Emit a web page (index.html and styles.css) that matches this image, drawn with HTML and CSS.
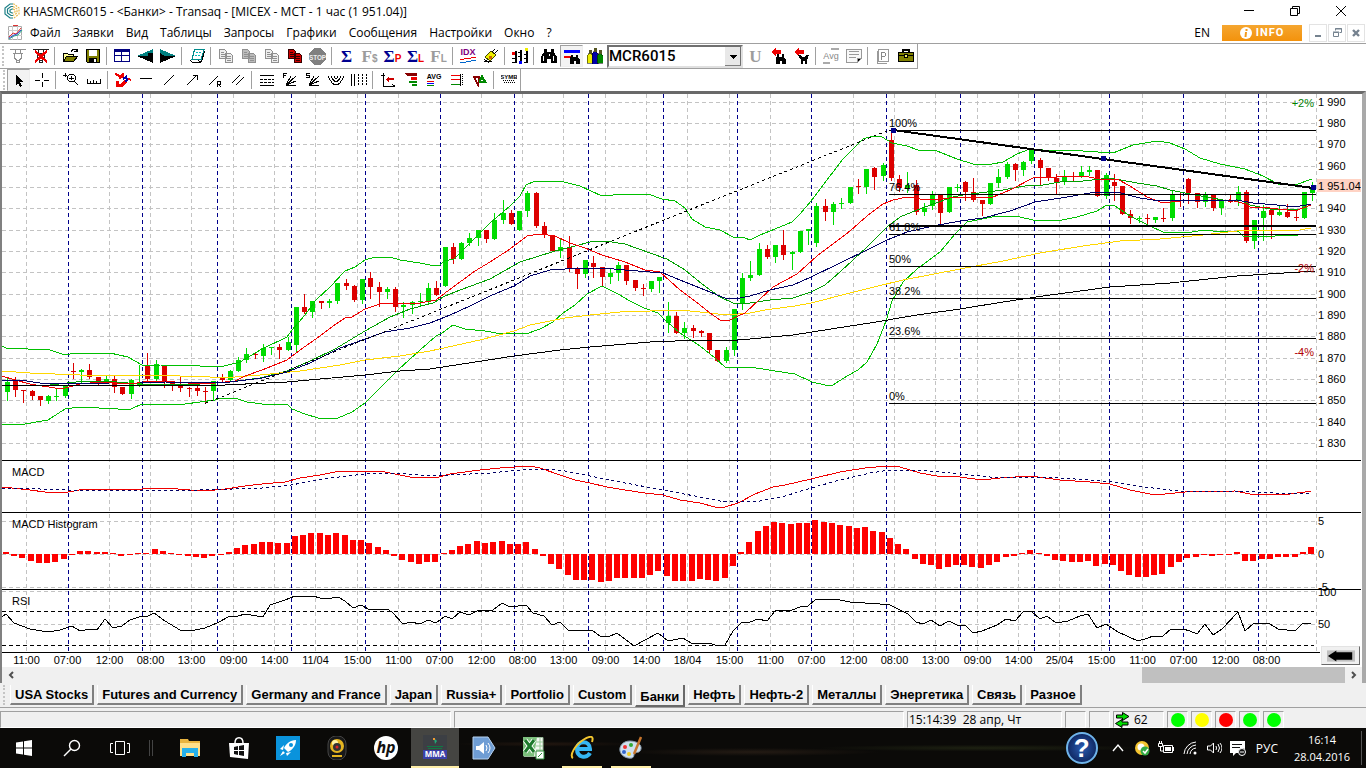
FILE: index.html
```html
<!DOCTYPE html>
<html lang="ru">
<head>
    <meta charset="UTF-8">
    <meta name="viewport" content="width=device-width, initial-scale=1.0">
    <title>Transaq</title>
    <link rel="stylesheet" href="styles.css">
</head>
<body>
    <header class="titleBar">
        <svg class="appIcon" viewBox="0 0 16 16"><g fill="none" stroke-width="1.2"><path stroke="#1a7f86" d="M9 1H6L1 5v6l5 4h3M9 3.500H7L3.500 6v4L7 12.500h2M9 6H8L6 7v2l2 1h1"/><path stroke="#e8b84a" d="M9 1h1l5 4v6l-5 4H9M9 3.500l4 2.500v4l-4 2.500M9 6l2 1v2l-2 1" stroke-dasharray="2 1"/></g></svg>
        <span class="titleText">KHASMCR6015 - &lt;Банки&gt; - Transaq - [MICEX - MCT - 1 час (1 951.04)]</span>
        <div class="windowButtons">
            <button aria-label="Свернуть"><svg viewBox="0 0 12 12"><path d="M1 5.500h10"/></svg></button>
            <button aria-label="Развернуть"><svg viewBox="0 0 12 12"><path d="M1.500 3.500h7v7h-7zM3.500 3.500v-2h7v7h-2"/></svg></button>
            <button aria-label="Закрыть"><svg viewBox="0 0 12 12"><path d="M1 1l10 10M11 1L1 11"/></svg></button>
        </div>
    </header>

    <nav class="menuBar">
        <svg class="docIcon" viewBox="0 0 16 16"><path fill="#fff" stroke="#aaa" d="M1.500 1.500h13v13h-13z"/><path stroke="#ccc" d="M5.500 1v14M10.500 1v14M1 5.500h14M1 10.500h14"/><path stroke="#d33" fill="none" d="M2 12l4-4 3 1 5-6M6 .500h5"/><path stroke="#2a8" fill="none" d="M2 14l5-3 4-1 4-5"/><path stroke="#44c" fill="none" d="M2 13l5-3 3-1 4-4"/></svg>
        <button>Файл</button>
        <button>Заявки</button>
        <button>Вид</button>
        <button>Таблицы</button>
        <button>Запросы</button>
        <button>Графики</button>
        <button>Сообщения</button>
        <button>Настройки</button>
        <button>Окно</button>
        <button>?</button>
        <span class="lang">EN</span>
        <button class="info"><svg viewBox="0 0 12 12"><circle cx="6" cy="6" r="6" fill="#fff"/><path stroke="#f39a1c" stroke-width="2" d="M6.500 2v2M6 5l-.500 5"/></svg>INFO</button>
        <div class="mdiButtons">
            <button aria-label="Свернуть окно"><svg viewBox="0 0 12 12"><path stroke-width="2" d="M3 9h6"/></svg></button>
            <button aria-label="Восстановить окно"><svg viewBox="0 0 12 12"><path d="M2.500 5.500h5v4h-5zM2 5h6M4.500 3.500v-2h6v4h-2M4 2h7"/></svg></button>
            <button aria-label="Закрыть окно"><svg viewBox="0 0 12 12"><path stroke-width="2.400" d="M3 3l6 6M9 3l-6 6"/></svg></button>
        </div>
    </nav>

    <div class="toolbar tradeBar">
        <i class="grip"></i>
        <button aria-label="Подключить"><svg viewBox="0 0 16 16"><path stroke="#909090" fill="none" d="M0 1.500h16M5.500 2v3M10.500 2v3M3 5.500h10M4.500 6v4l2 2h3l2-2V6M6.500 12v2.500h3V12"/></svg></button>
        <button aria-label="Отключить"><svg viewBox="0 0 16 16"><path stroke="#222" fill="none" d="M0 1.500h16M5.500 2v3M10.500 2v3M3 5.500h10M4.500 6v4l2 2h3l2-2V6M6.500 12v2.500h3V12"/><path stroke="#e00" stroke-width="2.500" d="M2 3l12 11M14 3L2 14"/></svg></button>
        <i class="sep"></i>
        <button aria-label="Открыть"><svg viewBox="0 0 16 16"><path fill="#ff9" stroke="#000" d="M1.500 13.500v-8h4l1 1h5v3"/><path fill="#808000" stroke="#000" d="M1.500 13.500l3-5h11l-4 5z"/><path fill="none" stroke="#000" d="M9 3.500l2-2h3l1 2m0-3v3h-3"/></svg></button>
        <button aria-label="Сохранить"><svg viewBox="0 0 16 16"><path fill="#808000" stroke="#000" d="M1.500 1.500h13v13h-12l-1-1z"/><path fill="#fff" d="M4 2h8v6H4z"/><path fill="#000" d="M4 10h8v5H4z"/><path fill="#fff" d="M9 11h2v3H9z"/></svg></button>
        <i class="sep"></i>
        <button aria-label="Таблица"><svg viewBox="0 0 16 16"><path fill="#fff" stroke="#000080" d="M.500 1.500h15v12H.500zM0 7.500h16M7.500 2v11"/><path fill="#000080" d="M0 1h16v3H0z"/></svg></button>
        <button aria-label="Назад"><svg viewBox="0 0 16 16"><path fill="#008080" d="M0 8l16-7v7z"/><path fill="#000" d="M0 8h11v-3h5v10z"/></svg></button>
        <button aria-label="Вперёд"><svg viewBox="0 0 16 16"><path fill="#008080" d="M16 8L0 1v7z"/><path fill="#000" d="M16 8H5L0 5v10z"/></svg></button>
        <i class="sep"></i>
        <button aria-label="Заявка"><svg viewBox="0 0 16 16"><path fill="#fff" stroke="#000" d="M1.500 11.500h8l1 3 2-1 3-10M1.500 11.500v1l2 2h7"/><path fill="#fff" stroke="#008b8b" d="M5.500 1.500h9.500l-3 10h-9z"/><path stroke="#0bb" stroke-dasharray="2 1" d="M7 4.500h6M6 7.500h5"/></svg></button>
        <i class="sep"></i>
        <button aria-label="Копия 1"><svg class="copy" viewBox="0 0 16 16"><path d="M1.500 1.500h5l2 2v7h-7zM7.500 5.500h5l2 2v7h-7z"/><path class="rows" d="M3 4.500h3M3 6.500h4M3 8.500h4M9 8.500h4M9 10.500h4M9 12.500h4"/></svg></button>
        <button aria-label="Копия 2"><svg class="copy solid" viewBox="0 0 16 16"><path d="M1.500 1.500h5l2 2v7h-7zM7.500 5.500h5l2 2v7h-7z"/><path class="rows" d="M3 4.500h3M3 6.500h4M3 8.500h4M9 8.500h4M9 10.500h4M9 12.500h4"/></svg></button>
        <button aria-label="Копия 3"><svg class="copy" viewBox="0 0 16 16"><path d="M1.500 1.500h5l2 2v7h-7zM7.500 5.500h5l2 2v7h-7z"/><path class="rows" d="M3 4.500h3M3 6.500h4M3 8.500h4M9 8.500h4M9 10.500h4M9 12.500h4"/></svg></button>
        <button aria-label="Копия 4"><svg class="copy redCopy" viewBox="0 0 16 16"><path d="M1.500 1.500h5l2 2v7h-7zM7.500 5.500h5l2 2v7h-7z"/><path class="rows" d="M3 4.500h3M3 6.500h4M3 8.500h4M9 8.500h4M9 10.500h4M9 12.500h4"/></svg></button>
        <button class="stop" aria-label="Стоп"><svg viewBox="0 0 16 16"><path fill="#808080" d="M5 0h6l5 5v6l-5 5H5l-5-5V5z"/><text x="8" y="11" text-anchor="middle" font-size="6" font-weight="bold" fill="#eee">STOP</text></svg></button>
        <i class="sep"></i>
        <button class="sigma">Σ</button>
        <button class="sigma off">F<small>$</small></button>
        <button class="sigma">Σ<small class="red">P</small></button>
        <button class="sigma">Σ<small class="red">L</small></button>
        <button class="sigma off">F<small>L</small></button>
        <i class="sep"></i>
        <button aria-label="IDX"><svg viewBox="0 0 16 16"><text x="8" y="7" text-anchor="middle" font-size="9" font-weight="bold" fill="#800080">IDX</text><path stroke="#e00" fill="none" d="M0 11.500h3l2-1h5l2-1h4"/><path stroke="#06c" fill="none" d="M0 14.500h5l2-1h3l2-1h4"/></svg></button>
        <button aria-label="Правка"><svg viewBox="0 0 16 16"><path fill="#ee0" stroke="#440" d="M2 9l6-6 5 4-6 6z"/><path stroke="#000" fill="none" d="M9 4l3-3M11 6l4-4M1 11l5 4M1 13h8"/><path fill="#c60" d="M6 8h3v3H6z"/></svg></button>
        <i class="sep"></i>
        <button aria-label="Свечи"><svg viewBox="0 0 16 16"><path stroke="#000" fill="none" stroke-width="2" d="M4 3v12M9 2v12M15 3v12"/><path stroke="#000" d="M0 10.500h3M0 14.500h3M6 4.500h3M6 8.500h3M12 6.500h3M12 10.500h3M12 14.500h3"/><path fill="#e00" d="M0 4h3v3H0z"/><path fill="#ee0" d="M13 0h3v3h-3z"/><path fill="#00f" d="M7 13h3v3H7z"/></svg></button>
        <i class="sep"></i>
        <button aria-label="Поиск"><svg viewBox="0 0 16 16"><path d="M3 1h3v3h4V1h3v3l3 5v6h-6v-4H6v4H0V9l3-5z"/><path stroke="#fff" d="M2.500 8v5M12.500 8v5M8 6v2"/></svg></button>
        <button class="pressed" aria-label="Уровни"><svg viewBox="0 0 16 16"><path fill="#00f" d="M0 2h16v3H0z"/><path fill="#e00" d="M0 8h7v2H0z"/><path d="M7 7h2v2h3V7h2v2l2 3v4h-4v-3h-2v3H6v-4z"/></svg></button>
        <button aria-label="Клиенты"><svg viewBox="0 0 16 16"><path fill="#ee0" stroke="#000" stroke-width=".500" d="M0 8l3-4 3 4v7H0z"/><path fill="#00a" stroke="#000" stroke-width=".500" d="M5 6l3-4 3 4v10H5z"/><path fill="#080" stroke="#000" stroke-width=".500" d="M10 8l3-4 3 4v7h-6z"/><path fill="#552" d="M2 2h3v4H2zM7 0h3v4H7zM12 2h3v4h-3z"/></svg></button>
        <select class="symbol" aria-label="Инструмент"><option>MCR6015</option></select>
        <button class="sigma off">U</button>
        <button aria-label="Найти назад"><svg viewBox="0 0 16 16"><path fill="#e00" d="M0 4l5-4v2h5v4H5v2z"/><path d="M6 6h2v3h3V6h2v3l2 3v4h-4v-3h-2v3H5v-4z"/></svg></button>
        <button aria-label="Найти далее"><svg viewBox="0 0 16 16"><path fill="#e00" d="M0 4l5-4v2h5v4H5v2z"/><path d="M4 7h2l2 2h2l2-2h3l-2 5v4h-2v-3H9v3H7v-4z"/></svg></button>
        <i class="sep"></i>
        <button aria-label="Avg"><svg viewBox="0 0 16 16"><text x="8" y="11" text-anchor="middle" font-size="9" fill="#888">Avg</text><path stroke="#aaa" stroke-width="2" d="M8 1h8M0 15h7"/></svg></button>
        <button aria-label="Новости"><svg viewBox="0 0 16 16"><path fill="#f8f8f8" stroke="#999" d="M.500 1.500h15v9l-4 4H.500z"/><path stroke="#999" d="M3 3.500h10M3 6.500h10M3 9.500h7M11 14v-4h4"/></svg></button>
        <i class="sep"></i>
        <button aria-label="Портфель P"><svg viewBox="0 0 16 16"><path fill="#fff" stroke="#999" d="M3.500 1.500h10v12h-10zM2.500 3v12.500H12"/><path stroke="#888" fill="none" d="M6.500 12V4.500h3l1 1v2l-1 1h-3"/></svg></button>
        <button aria-label="Портфель"><svg viewBox="0 0 16 16"><path fill="#808000" stroke="#000" d="M.500 4.500h15v9H.500z"/><path fill="none" stroke="#000" stroke-width="2" d="M5 4V2h6v2"/><path stroke="#000" d="M0 7.500h6M10 7.500h6"/><path fill="#ee6" stroke="#000" d="M6.500 6.500h3v3h-3z"/></svg></button>
    </div>

    <div class="toolbar drawBar">
        <i class="grip"></i>
        <button class="pressed" aria-label="Указатель"><svg viewBox="0 0 16 16"><path d="M5 3v10l2-2 2 4 2-1-2-4h3z"/></svg></button>
        <button aria-label="Перекрестие"><svg viewBox="0 0 16 16"><path stroke="#000" d="M8.500 1v5M8.500 10v5M1 8.500h5M10 8.500h5"/></svg></button>
        <i class="sep"></i>
        <button aria-label="Лупа"><svg viewBox="0 0 16 16"><path fill="none" stroke="#000" d="M6.500 2.500h4l2 2v3l-2 2h-4l-2-2v-3zM11 9l4 4M6 6h5M8.500 4v4M2 1v4M0 3h4"/></svg></button>
        <button aria-label="Линейка"><svg viewBox="0 0 16 16"><path stroke="#000" fill="none" d="M1.500 7v4.500h13V7M4.500 9v2M7.500 8v3M10.500 9v2"/></svg></button>
        <i class="sep"></i>
        <button aria-label="Магнит"><svg viewBox="0 0 16 16"><path stroke="#e00" stroke-width="3" fill="none" d="M9 2L4 6M2 9v4h5l4-4"/><path stroke="#e00" stroke-width="2" d="M0 2l16 6"/><path stroke="#00a" stroke-width="2" fill="none" d="M8 7l3-2 1 3-2 2"/></svg></button>
        <button aria-label="Горизонталь"><svg viewBox="0 0 16 16"><path stroke="#000" d="M2 6.500h12"/></svg></button>
        <button aria-label="Отрезок"><svg viewBox="0 0 16 16"><path stroke="#000" d="M3 13L13 3"/></svg></button>
        <button aria-label="Луч"><svg viewBox="0 0 16 16"><path stroke="#000" fill="none" d="M3 13L13 3M9 3.500h4.500V8"/></svg></button>
        <button aria-label="Регрессия"><svg viewBox="0 0 16 16"><path stroke="#000" fill="none" d="M2 13L11 4M10.500 15V9.500h3v3h-3M12 13l2 2"/></svg></button>
        <button aria-label="Канал"><svg viewBox="0 0 16 16"><path stroke="#000" d="M2 11l8-8M6 13l8-8"/></svg></button>
        <i class="sep"></i>
        <button aria-label="Уровни Фибоначчи"><svg viewBox="0 0 16 16"><path stroke="#000" d="M1 3.500h14M1 13.500h14"/><path stroke="#000" stroke-dasharray="3 1" d="M1 7.500h14M1 10.500h14"/></svg></button>
        <button aria-label="Веер F"><svg viewBox="0 0 16 16"><path stroke="#000" fill="none" d="M1.500 6V1.500h3M2 3.500h2M4 13L9 4M4 13L14 4M4 13l10-4M4 13.500h10"/></svg></button>
        <button aria-label="Веер S"><svg viewBox="0 0 16 16"><path stroke="#000" fill="none" d="M5 1.500H1.500v2h3v2H1M4 13L9 4M4 13L14 4M4 13l10-4M4 13.500h10"/></svg></button>
        <button aria-label="Дуги"><svg viewBox="0 0 16 16"><path stroke="#000" fill="none" d="M0 4q8 18 16 0M3 4q5 11 10 0M6 4q2 5 4 0"/></svg></button>
        <button aria-label="Временные зоны"><svg viewBox="0 0 16 16"><path stroke="#000" d="M.500 2v12M3.500 2v12"/><path stroke="#000" stroke-dasharray="2 1" d="M7.500 2v12M11.500 2v12M15.500 2v12"/></svg></button>
        <i class="sep"></i>
        <button aria-label="Оси"><svg viewBox="0 0 16 16"><path stroke="#000" fill="none" d="M3.500 1v13.500H15M1 3.500h4M12 12l3 2.500"/><path fill="#c00" d="M6 7l3-3v2h5v2H9v3z"/></svg></button>
        <button aria-label="Объёмы"><svg viewBox="0 0 16 16"><path fill="#800" d="M2 1h12v3H4z"/><path fill="#e00" d="M8 5h6v3H8z"/><path fill="#080" d="M6 9h8v2H6zM9 12h5v2H9z"/></svg></button>
        <button aria-label="AVG"><svg viewBox="0 0 16 16"><text x="8" y="7" text-anchor="middle" font-size="7" font-weight="bold">AVG</text><path stroke="#e00" d="M1 9.500h7"/><path stroke="#00f" d="M1 11.500h7"/><path stroke="#080" d="M1 13.500h7"/></svg></button>
        <button aria-label="Стакан"><svg viewBox="0 0 16 16"><path stroke="#e00" d="M2 3.500h9M2 7.500h9"/><path stroke="#080" d="M2 12.500h9"/><path stroke="#000" d="M11.500 2v12"/><path stroke="#000" stroke-dasharray="1 1" d="M13.500 2v12"/></svg></button>
        <button aria-label="Сделки"><svg viewBox="0 0 16 16"><path fill="#080" d="M5 11l5-9 5 9z"/><path stroke="#800" fill="none" stroke-width="1.500" d="M2 5h5l-1 8z"/><path stroke="#fff" d="M9 8h2"/></svg></button>
        <i class="sep"></i>
        <button aria-label="SYMB"><svg viewBox="0 0 16 16"><text x="8" y="7" text-anchor="middle" font-size="6" font-weight="bold">SYMB</text><path stroke="#000" stroke-dasharray="1 1" d="M2 8.500h12M3 10.500h11"/></svg></button>
    </div>

    <main class="chartWindow">
        <svg id="chart" viewBox="2 94 1359 573" role="img" aria-label="MICEX - MCT - 1 час"></svg>
        <button class="scrollLast" aria-label="К последней свече"><svg viewBox="0 0 30 12"><path fill="#c0c0c0" d="M0 0h30v12H0z"/><path d="M1 6l9-6v2h17v8H10v2z"/></svg></button>
    </main>

    <div class="scrollBar">
        <button aria-label="Влево"><svg viewBox="0 0 8 8"><path d="M6 1L3 4l3 3"/></svg></button>
        <div class="track"><div class="thumb"></div></div>
        <button aria-label="Вправо"><svg viewBox="0 0 8 8"><path d="M2 1l3 3-3 3"/></svg></button>
    </div>

    <nav class="tabs">
        <i class="grip"></i>
        <button>USA Stocks</button>
        <button>Futures and Currency</button>
        <button>Germany and France</button>
        <button>Japan</button>
        <button>Russia+</button>
        <button>Portfolio</button>
        <button>Custom</button>
        <button class="active">Банки</button>
        <button>Нефть</button>
        <button>Нефть-2</button>
        <button>Металлы</button>
        <button>Энергетика</button>
        <button>Связь</button>
        <button>Разное</button>
    </nav>

    <div class="statusBar">
        <span class="cell wide"></span>
        <span class="cell wide"></span>
        <span class="cell time">15:14:39&nbsp; 28 апр, Чт</span>
        <span class="cell small"></span>
        <span class="cell small"></span>
        <span class="cell traffic"><svg viewBox="0 0 16 16"><path fill="#0d0" stroke="#000" d="M2.500 3h6V.500L15 4.500l-6.500 4V6h-6zM14 10H8V7.500l-6.500 4 6.500 4V13h6z"/></svg>62</span>
        <span class="cell led"><i class="green"></i></span>
        <span class="cell led"><i class="yellow"></i></span>
        <span class="cell led"><i class="redLed"></i></span>
        <span class="cell led"><i class="green"></i></span>
        <span class="cell led"><i class="green"></i></span>
    </div>

    <footer class="taskbar">
        <div class="system">
            <button aria-label="Пуск"><svg viewBox="0 0 24 24"><path fill="#fff" d="M4 6.500l7-1v6H4zM12 5.300l8-1.300v7.500h-8zM4 12.500h7v6l-7-1zM12 12.500h8V20l-8-1.300z"/></svg></button>
            <button aria-label="Поиск"><svg viewBox="0 0 24 24"><g fill="none" stroke="#fff" stroke-width="1.400"><circle cx="14.500" cy="9.500" r="5"/><path d="M11 13l-7 7"/></g></svg></button>
            <button aria-label="Представление задач"><svg viewBox="0 0 24 24"><path fill="none" stroke="#fff" d="M7.500 5.500h9v13h-9zM5 7.500H2.500v9H5M19 7.500h2.500v9H19"/></svg></button>
        </div>
        <i class="divider"></i>
        <div class="apps">
            <button aria-label="Проводник"><svg viewBox="0 0 24 24"><path fill="#e8b440" d="M2 3h8l1 2h11v15H2z"/><path fill="#ffe08a" d="M2 7h20v13H2z"/><path fill="#26b0ea" d="M4 12h16v9h-4v-4H8v4H4z"/></svg></button>
            <button aria-label="Магазин"><svg viewBox="0 0 24 24"><path fill="#fff" d="M2 7h20l-1 16L3 21z"/><path fill="none" stroke="#fff" stroke-width="1.500" d="M8 7c0-7 8-7 8 0"/><path fill="#111" d="M7 11l4-1v4H7zM12 10l5-1v5h-5zM7 15h4v4l-4-1zM12 15h5v5l-5-1z"/></svg></button>
            <button aria-label="Ракета"><svg viewBox="0 0 24 24"><path fill="#0a93dc" d="M0 0h24v24H0z"/><path fill="#fff" d="M20 4c-6 0-10 4-12 8l4 4c4-2 8-6 8-12zM8 9l-4 4 3 1zM15 16l-4 4-1-3zM4 20l3-5 2 2z"/><circle cx="15" cy="9" r="2" fill="#0a93dc"/></svg></button>
            <button aria-label="Камера"><svg viewBox="0 0 24 24"><rect x="3" y="0" width="18" height="24" rx="8" fill="#181818" stroke="#444"/><circle cx="12" cy="10" r="7" fill="#e5b520"/><circle cx="10" cy="7" r="3" fill="#fff3a8"/><circle cx="12" cy="11" r="4" fill="#333"/><circle cx="12" cy="11" r="1.500" fill="#d22"/><path fill="#e5b520" d="M7 19h10v2H7z"/></svg></button>
            <button aria-label="HP"><svg viewBox="0 0 24 24"><circle cx="12" cy="12" r="12" fill="#fff"/><text x="12" y="17" text-anchor="middle" font-size="16" font-style="italic" font-weight="bold" fill="#111">hp</text></svg></button>
            <button class="current" aria-label="MMA"><svg viewBox="0 0 24 24"><path fill="#3c3f44" d="M0 0h24v24H0z"/><path fill="#2a7" d="M11 3l3 3-2 3z"/><path fill="#e93" d="M10 3h2v2h-2z"/><path stroke="#174" d="M4 11.500h16M5 13.500h14"/><path fill="#3b41a8" d="M0 15h24v9H0z"/><text x="12" y="22" text-anchor="middle" font-size="8" font-weight="bold" fill="#fff">MMA</text></svg></button>
            <button aria-label="Звук"><svg viewBox="0 0 24 24"><path fill="#6f9dd4" stroke="#b9d3f0" d="M1 1h15l7 11-7 11H1z"/><path fill="#fff" d="M4 10h3l5-4v12l-5-4H4z"/><path stroke="#fff" fill="none" d="M14 9q2 3 0 6M16 7q4 5 0 10"/></svg></button>
            <button aria-label="Excel"><svg viewBox="0 0 24 24"><path fill="#f4f8f2" stroke="#9b9" d="M3 1.500h19v19H3z"/><path fill="#7cc07c" d="M2 1h14l-3 19H2z"/><path stroke="#9c9" d="M15 6h7M15 10h7M15 14h7M19 2v18"/><path stroke="#fff" stroke-width="5" d="M4 4l9 12M13 4L4 16"/><path stroke="#1d7a2c" stroke-width="3" d="M4 4l9 12M13 4L4 16"/><path fill="#fff" stroke="#2e8b3a" d="M15 15h8v8h-8z"/><path stroke="#2e8b3a" d="M17 21l4-4"/></svg></button>
            <button class="open" aria-label="Internet Explorer"><svg viewBox="0 0 24 24"><path fill="none" stroke="#35b6f2" stroke-width="4" d="M20 17c-3 6-13 5-13-4s13-9 13 0H8"/><path fill="none" stroke="#f3c62f" stroke-width="2" d="M3 22C-1 20 5 9 13 4s11-4 9 2"/></svg></button>
            <button class="open" aria-label="Paint"><svg viewBox="0 0 24 24"><path fill="#cfe0ee" stroke="#89a" d="M11 5C4 5 0 10 1 15s7 8 12 7c3-1 1-4 3-5s5 0 6-4-4-8-11-8z"/><circle cx="6" cy="11" r="2" fill="#e33"/><circle cx="12" cy="9" r="2" fill="#3a3"/><circle cx="5" cy="16" r="2" fill="#36c"/><circle cx="10" cy="18" r="2" fill="#ec2"/><path stroke="#c8752c" stroke-width="2.500" d="M22 1l-7 17"/></svg></button>
        </div>
        <div class="tray">
            <button class="help" aria-label="Справка">?</button>
            <svg viewBox="0 0 16 16"><path fill="none" stroke="#fff" stroke-width="1.400" d="M3 11l5-6 5 6"/></svg>
            <svg viewBox="0 0 16 16"><circle cx="8" cy="8" r="7" fill="#f4c430"/><circle cx="7" cy="7" r="3.500" fill="#fff"/><circle cx="11" cy="11" r="4.500" fill="#3a4"/><path stroke="#fff" fill="none" stroke-width="1.500" d="M9 11l2 2 3-4"/></svg>
            <svg viewBox="0 0 16 16"><path fill="none" stroke="#fff" d="M5.500 5.500h9v7h-9zM15.500 7v4M.500 3.500h4v3h-4zM2.500 7v4h3M1.500 1v2M3.500 1v2"/><path fill="#fff" d="M7 7h6v4H7z"/></svg>
            <svg viewBox="0 0 16 16"><g fill="none" stroke="#fff"><path d="M2 14A13 13 0 0 1 14 2"/><path d="M5 14a10 10 0 0 1 9-9"/><path d="M8 14a7 7 0 0 1 6-6"/></g><circle cx="13" cy="13" r="1.500" fill="#fff"/></svg>
            <svg viewBox="0 0 16 16"><path fill="none" stroke="#fff" d="M1.500 6h3l3-3v10l-3-3h-3zM10 6q1 2 0 4M12 4q3 4 0 8M14 3q4 5 0 10"/></svg>
            <svg viewBox="0 0 16 16"><path fill="#fff" d="M0 1h15v8a5 5 0 0 0-7 4H6l-3 3v-3H0z"/><path stroke="#111" d="M2 4.500h10M2 7.500h8"/><circle cx="12" cy="12" r="3.500" fill="#111" stroke="#fff"/><path stroke="#fff" d="M10 12h4"/></svg>
            <span class="keyboard">РУС</span>
            <time class="clock"><span>16:14</span><span>28.04.2016</span></time>
        </div>
    </footer>
    <script src="chart.js"></script>
</body>
</html>
```

FILE: styles.css
```css
* {
    box-sizing: border-box;
}
body {
    margin: 0;
    background-color: white;
    color: black;
    font-family: "Open Sans", "Noto Sans", sans-serif;
    font-size: 12px;
}
button {
    margin: 0;
    padding: 0;
    border: none;
    background: transparent;
    color: inherit;
    font: inherit;
}
svg {
    display: block;
    flex: none;
}

/* title and menu */
.titleBar {
    display: flex;
    align-items: center;
    height: 22px;
    padding-left: 2px;
}
.appIcon {
    width: 20px;
    height: 16px;
}
.titleText {
    flex: 1;
    padding-left: 1px;
}
.windowButtons {
    display: flex;
    padding-right: 2px;
}
.windowButtons button {
    display: flex;
    align-items: center;
    justify-content: center;
    width: 46px;
    height: 20px;
}
.windowButtons svg, .mdiButtons svg {
    width: 12px;
    height: 12px;
    fill: none;
    stroke: black;
}
.menuBar {
    display: flex;
    align-items: center;
    gap: 12px;
    height: 22px;
    padding: 0 1px 0 7px;
    border-bottom: 1px solid #a0a0a0;
}
.docIcon {
    width: 16px;
    height: 16px;
    margin-right: -5px;
}
.lang {
    margin-left: auto;
}
.menuBar .info {
    display: flex;
    align-items: center;
    justify-content: center;
    gap: 4px;
    width: 80px;
    height: 16px;
    background: linear-gradient(#f5a630, #f3920c);
    color: white;
    font: bold 11px Roboto, sans-serif;
    letter-spacing: 1px;
}
.info svg {
    width: 12px;
    height: 12px;
}
.mdiButtons {
    display: flex;
    gap: 1px;
    margin-left: -5px;
}
.mdiButtons button {
    display: flex;
    align-items: center;
    justify-content: center;
    width: 18px;
    height: 18px;
    border: 1px solid #e3e3e3;
}
.mdiButtons svg {
    stroke: #75828f;
}

/* toolbars */
.toolbar {
    display: flex;
    align-items: center;
    width: fit-content;
    padding-left: 2px;
    border-right: 1px solid #a0a0a0;
}
.tradeBar {
    height: 25px;
    border-bottom: 1px solid #a0a0a0;
}
.drawBar {
    height: 22px;
    padding-left: 3px;
}
.toolbar button {
    display: flex;
    align-items: center;
    justify-content: center;
    width: 23px;
    height: 22px;
}
.toolbar svg {
    width: 16px;
    height: 16px;
    shape-rendering: crispEdges;
    font-family: "Liberation Sans", sans-serif;
}
.toolbar .stop svg {
    width: 17px;
    height: 17px;
}
.toolbar .pressed {
    background-color: #f3f3f3;
    border: 1px solid;
    border-color: #a0a0a0 #eee #eee #a0a0a0;
}
.grip {
    width: 3px;
    height: 20px;
    margin-right: 1px;
    border-left: 2px dotted #c4c4c4;
}
.sep {
    width: 1px;
    height: 18px;
    margin: 0 3px 0 2px;
    background-color: #a0a0a0;
}
.copy path {
    fill: #eee;
    stroke: #909090;
}
.solid path {
    fill: #bbb;
}
.redCopy path {
    fill: #d00000;
    stroke: #300;
}
.toolbar .sigma {
    align-items: baseline;
    color: #000090;
    font: bold 17px/24px "Liberation Serif", serif;
}
.toolbar .off {
    color: #9c9c9c;
}
.sigma small {
    font: bold 10px "Liberation Sans", sans-serif;
}
.toolbar .red {
    color: #f00000;
}
.symbol {
    width: 136px;
    height: 23px;
    margin: 0 1px;
    padding: 0;
    border: 2px solid;
    border-color: #707070 #e0e0e0 #e0e0e0 #707070;
    border-radius: 0;
    appearance: none;
    color: black;
    font: 500 15px Roboto, sans-serif;
    background:
        linear-gradient(#000, #000) right 4px top 8px / 7px 1px no-repeat,
        linear-gradient(#000, #000) right 5px top 9px / 5px 1px no-repeat,
        linear-gradient(#000, #000) right 6px top 10px / 3px 1px no-repeat,
        linear-gradient(#000, #000) right 7px top 11px / 1px 1px no-repeat,
        linear-gradient(#808080, #808080) right bottom / 16px 1px no-repeat,
        linear-gradient(90deg, #e8e8e8 15px, #707070 15px) right / 16px 100% no-repeat white;
}

/* chart */
.chartWindow {
    position: relative;
    border: solid;
    border-width: 3px 4px 0 2px;
    border-color: #696969 #a9a9a9 #696969 #808080;
    padding-right: 1px;
}
#chart {
    width: 100%;
    height: auto;
    font: 11px "Liberation Sans", sans-serif;
    shape-rendering: crispEdges;
}
#chart polyline {
    fill: none;
}
.grid {
    stroke: #c3c3c3;
    stroke-dasharray: 4 3;
}
.session {
    stroke: #00008b;
    stroke-dasharray: 4 3;
}
.frame, .fib {
    stroke: black;
}
.thick {
    stroke: black;
    stroke-width: 2;
}
.limit {
    stroke: black;
    stroke-dasharray: 4 3;
}
.ray {
    stroke: black;
    stroke-dasharray: 3 3;
}
.up {
    fill: #00dc00;
}
.down {
    fill: #dc0000;
}
.hist {
    fill: #ff0000;
}
.band {
    stroke: #00c000;
}
.middle {
    stroke: #00a000;
}
.fast, .macd {
    stroke: #f00000;
}
.slow {
    stroke: #000064;
}
.signal {
    stroke: #000064;
    stroke-dasharray: 3 3;
}
.long {
    stroke: #ffd700;
}
.longest, .rsi {
    stroke: black;
}
.anchor {
    fill: #00008b;
}
.price {
    fill: #ffd3c4;
}
.gain {
    fill: #008000;
}
.loss {
    fill: #b00000;
}
.hours {
    text-anchor: middle;
}
.gain, .loss {
    text-anchor: end;
}
.scrollLast {
    position: absolute;
    right: 2px;
    bottom: 2px;
    display: flex;
    align-items: center;
    justify-content: center;
    width: 39px;
    height: 19px;
    background-color: #f0f0f0;
    border: 1px solid;
    border-color: #e3e3e3 #696969 #696969 #e3e3e3;
}
.scrollLast svg {
    width: 28px;
    height: 12px;
}

/* scroll bar and tabs */
.scrollBar {
    display: flex;
    height: 16px;
    border-right: 4px solid #a9a9a9;
    border-left: 2px solid #808080;
    background-color: #f0f0f0;
}
.scrollBar button {
    display: flex;
    align-items: center;
    justify-content: center;
    width: 17px;
}
.scrollBar svg {
    width: 8px;
    height: 8px;
    fill: none;
    stroke: #505050;
    stroke-width: 2;
}
.track {
    display: flex;
    flex: 1;
    justify-content: flex-end;
}
.thumb {
    width: 15.3%;
    background-color: #c0c0c0;
}
.tabs {
    display: flex;
    align-items: flex-start;
    gap: 3px;
    height: 25px;
    padding: 2px 3px 0;
    border-bottom: 1px solid #a0a0a0;
    background-color: #f0f0f0;
    font: bold 13px "Liberation Sans", sans-serif;
}
.tabs button {
    height: 20px;
    padding: 0 4px;
    border: solid;
    border-width: 0 2px 2px 1px;
    border-color: white #808080 #808080 white;
}
.tabs .active {
    height: 22px;
    padding-top: 3px;
    border-color: #f0f0f0 #696969 #696969 white;
}

/* status bar */
.statusBar {
    display: flex;
    gap: 3px;
    height: 20px;
    padding: 3px 82px 1px 0;
    background-color: #f0f0f0;
    font: 12px/16px "Open Sans", "Noto Sans", sans-serif;
}
.cell {
    display: flex;
    align-items: center;
    height: 17px;
    border: 1px solid;
    border-color: #a0a0a0 white white #a0a0a0;
}
.wide {
    flex: 1;
}
.time {
    width: 155px;
    padding-left: 1px;
}
.small {
    width: 21px;
}
.traffic {
    width: 51px;
    gap: 4px;
}
.traffic svg {
    width: 16px;
    height: 16px;
}
.led {
    justify-content: center;
    width: 21px;
}
.led i {
    width: 14px;
    height: 14px;
    border-radius: 7px;
}
.green {
    background-color: #00ff00;
}
.yellow {
    background-color: #ffff00;
}
.redLed {
    background-color: #ff0000;
}

/* taskbar */
.taskbar {
    display: flex;
    align-items: center;
    height: 40px;
    background:
        radial-gradient(ellipse at 55% 60%, #241b14 0, transparent 12%),
        radial-gradient(ellipse at 40% 40%, #21160f 0, transparent 8%),
        radial-gradient(ellipse at 72% 50%, #1e2212 0, transparent 12%),
        #0b0a08;
    color: white;
}
.taskbar button {
    display: flex;
    align-items: center;
    justify-content: center;
    width: 48px;
    height: 40px;
}
.taskbar button svg {
    width: 24px;
    height: 24px;
}
.system, .apps {
    display: flex;
}
.apps {
    gap: 1px;
}
.divider {
    width: 4px;
    height: 16px;
    margin: 0 13px 0 5px;
    border: solid #444;
    border-width: 0 1px;
}
.taskbar .current {
    background-color: #454542;
    border-bottom: 2px solid #ffefa8;
}
.taskbar .open {
    background: linear-gradient(#ffefa8, #ffefa8) bottom / 40px 2px no-repeat;
}
.tray {
    display: flex;
    align-items: center;
    gap: 8px;
    margin-left: auto;
    padding-right: 4px;
}
.tray > svg {
    width: 16px;
    height: 16px;
}
.tray .help {
    width: 32px;
    height: 32px;
    margin-right: 4px;
    border: 2px solid #6fb4ea;
    border-radius: 50%;
    background: radial-gradient(#2a5bb0, #061646);
    font: bold 26px "Liberation Sans", sans-serif;
}
.keyboard {
    padding: 0 3px 0 2px;
}
.clock {
    display: flex;
    flex-direction: column;
    align-items: center;
    width: 73px;
    padding-right: 6px;
    border-right: 1px solid #555;
    line-height: 17px;
    font-size: 11px;
}
```

FILE: chart.js
```javascript
// [high, body top, body bottom, low, up]
const candles = [
    [377,382,392,400,1],[377,380,390,396,0],[390,390,391,402,0],[390,391,396,399,0],[396,396,400,405,0],[395,396,401,403,1],[389,396,397,400,1],[385,386,396,397,1],
    [363,371,372,378,0],[369,370,372,382,1],[364,370,377,378,0],[377,377,383,385,0],[376,379,383,383,1],[376,379,387,392,0],[387,387,394,394,0],[379,380,394,398,1],
    [365,383,386,386,1],[353,365,379,381,0],[360,364,379,380,1],[365,365,381,387,0],[382,382,385,390,0],[377,385,388,391,0],[387,388,389,396,0],[384,388,391,395,0],
    [387,391,392,403,0],[381,381,391,400,1],[374,378,380,382,0],[370,371,380,380,1],[357,360,371,371,1],[348,354,360,362,1],[353,354,355,358,0],[344,348,356,361,1],
    [347,347,348,354,1],[344,347,350,358,0],[337,342,350,350,1],[307,307,345,352,1],[294,307,312,313,0],[301,301,312,317,1],[301,301,303,308,0],[299,301,303,307,1],
    [283,283,301,303,1],[279,283,286,289,0],[285,286,300,301,0],[279,279,300,303,1],[272,278,287,298,0],[282,287,292,306,0],[287,289,292,298,1],[287,289,307,311,0],
    [302,305,307,317,1],[301,302,305,313,1],[293,301,302,306,1],[283,288,301,304,1],[281,288,295,295,0],[247,247,286,286,1],[243,247,259,263,0],[242,243,259,259,1],
    [233,238,243,245,1],[230,230,238,245,1],[230,230,239,242,0],[213,220,239,239,1],[200,213,220,223,1],[210,213,224,224,0],[211,211,230,230,1],[191,193,211,216,1],
    [192,193,226,227,0],[222,226,235,237,0],[235,235,251,251,0],[239,247,251,257,1],[236,247,268,271,0],[267,268,274,288,0],[260,260,274,277,1],[256,263,267,277,0],
    [267,267,277,286,0],[269,273,277,283,1],[262,265,273,280,1],[265,265,281,284,0],[280,280,288,290,0],[284,288,289,295,0],[281,281,289,291,1],[277,277,281,292,1],
    [302,316,323,332,1],[312,316,333,333,0],[322,328,333,338,1],[325,328,331,337,0],[330,331,333,336,0],[333,333,350,353,0],[350,350,361,361,0],[347,350,361,362,1],
    [309,309,350,355,1],[273,278,304,309,1],[261,275,278,280,1],[243,249,275,275,1],[245,249,257,258,0],[245,245,257,262,1],[230,245,255,259,0],[251,252,254,269,1],
    [231,231,252,252,1],[229,229,231,244,1],[203,206,243,246,1],[199,206,212,220,0],[202,204,212,224,1],[198,203,204,208,1],[187,187,203,203,1],[179,186,187,193,0],
    [169,169,187,193,1],[167,168,177,189,0],[163,165,176,180,1],[131,140,178,180,0],[175,179,188,191,0],[172,185,188,192,1],[180,185,212,214,0],[203,208,212,215,1],
    [191,195,206,209,1],[195,195,213,225,0],[187,187,212,212,1],[184,187,188,191,1],[181,182,192,200,0],[178,192,200,201,0],[200,200,204,215,0],[183,183,204,204,1],
    [169,177,183,187,1],[162,164,177,178,1],[163,164,170,180,0],[161,162,170,175,1],[150,150,161,163,1],[158,160,168,184,0],[168,168,178,180,0],[174,178,182,194,0],
    [170,176,182,184,1],[172,176,177,181,0],[166,172,177,177,1],[166,170,172,175,1],[170,170,196,196,0],[173,175,196,198,1],[174,182,186,200,0],[186,186,214,214,0],
    [210,214,218,223,0],[216,218,219,222,1],[214,218,219,224,0],[217,217,220,222,1],[208,218,219,221,0],[191,194,218,220,1],[192,194,195,206,0],[178,179,193,203,0],
    [193,193,202,207,0],[192,194,202,206,1],[195,195,208,210,0],[200,200,208,214,1],[195,200,202,202,0],[186,192,200,205,1],[190,192,241,242,0],[220,220,241,248,1],
    [205,211,218,240,1],[210,210,215,238,0],[206,212,215,215,1],[204,212,217,217,0],[210,217,218,220,0],[192,192,218,218,1],[182,187,193,200,1]
];

const histogram = [
    2,-2,-4,-7,-9,-9,-8,-5,-1,3,3,2,2,1,-2,-1,1,1,5,3,1,-1,-2,-3,-4,-2,-1,2,6,9,10,12,12,11,11,18,19,21,21,19,
    21,19,14,14,11,7,4,-2,-6,-8,-10,-8,-8,1,4,8,10,13,11,12,13,10,10,12,5,-2,-10,-15,-21,-26,-26,-26,-28,-27,-24,-24,-24,-24,-21,-17,
    -22,-27,-27,-27,-25,-26,-27,-24,-12,2,12,23,28,32,31,30,31,31,34,32,31,29,28,26,27,23,22,16,10,5,-5,-10,-11,-15,-13,-11,-11,-13,-14,-11,
    -8,-3,-2,1,4,1,-2,-6,-7,-8,-8,-7,-12,-10,-11,-17,-21,-23,-23,-21,-20,-13,-8,-4,-3,-1,-2,-1,-1,2,-7,-7,-5,-5,-3,-3,-3,2,7
];

const lines = [
    ['band', '2,346 6,348 50,350 65,355 75,353 110,353 128,357 142,365 160,365 200,366 220,367 240,362 262,349 287,337 292,330 305,315 316,300 330,287 345,271 355,267 365,260 375,257 390,257 400,260 420,263 435,266 440,265 444,261 454,259 470,243 490,223 510,206 520,196 526,185 535,181 560,181 580,186 602,196 625,194 648,194 662,199 675,201 685,208 692,219 705,227 720,230 733,237 745,238 750,240 760,235 775,229 792,222 800,214 811,201 830,176 843,159 863,139 873,136 882,137 892,143 907,146 918,150 937,151 957,159 973,164 992,164 1003,162 1017,154 1030,149 1043,150 1083,151 1113,153 1133,145 1157,141 1170,143 1185,149 1200,158 1220,164 1245,169 1263,176 1278,184 1298,184 1312,179'],
    ['band', '2,425 25,424 48,420 65,409 80,407 118,409 131,409 142,404 185,404 215,400 220,398 235,398 247,402 270,405 287,404 292,409 305,414 318,418 338,418 352,412 365,403 385,383 398,370 420,350 436,336 442,333 453,325 465,329 485,331 502,334 520,333 526,334 540,329 553,322 563,313 575,305 587,294 602,286 618,294 630,301 644,308 658,313 665,320 680,333 694,342 700,346 715,358 725,367 750,367 775,371 795,374 812,382 825,385 833,385 847,376 858,370 867,362 877,344 886,321 892,301 903,282 917,269 940,252 955,234 967,222 997,216 1020,217 1033,220 1062,220 1077,217 1097,211 1107,205 1115,206 1130,216 1150,226 1163,232 1187,233 1203,230 1223,232 1238,231 1243,236 1267,237 1283,235 1298,235'],
    ['middle', '2,386 50,385 85,381 105,381 140,384 200,384 230,382 260,378 287,371 310,361 335,349 365,331 390,317 410,309 433,303 445,296 460,290 490,279 520,262 555,251 575,246 590,242 605,241 625,244 650,253 667,259 685,270 702,284 720,297 733,303 750,303 770,300 793,298 811,292 825,285 840,272 867,247 887,227 900,217 917,210 933,204 953,197 963,195 1003,190 1030,185 1043,185 1060,182 1083,181 1110,178 1137,183 1157,186 1170,190 1190,194 1223,200 1240,200 1250,205 1270,209 1297,210 1311,205'],
    ['long', '2,371 30,373 80,375 150,375 210,377 235,377 260,375 300,371 340,365 365,360 400,356 430,351 480,340 514,331 530,325 565,318 590,315 620,312 650,311 680,310 700,312 727,315 750,313 765,310 795,306 811,303 850,293 870,288 903,280 960,269 1003,261 1040,253 1083,246 1120,241 1160,239 1203,235 1237,231 1300,230 1311,228'],
    ['fast', '2,376 15,380 30,384 55,388 65,388 80,384 100,382 130,384 150,381 175,382 200,384 215,383 235,381 245,376 262,370 287,360 300,350 320,336 333,326 345,318 352,317 365,309 380,304 400,303 420,303 436,300 445,293 460,282 475,271 490,262 510,249 527,236 540,234 555,236 570,243 585,248 602,255 625,262 645,270 660,272 670,281 680,290 695,301 710,313 720,320 728,321 738,316 745,313 773,287 797,274 817,256 850,231 867,216 883,204 893,200 907,197 927,200 960,197 993,197 1010,190 1033,178 1057,177 1083,176 1100,179 1117,179 1130,186 1147,197 1163,203 1180,201 1230,200 1242,203 1250,207 1270,208 1295,211 1311,205'],
    ['slow', '2,380 20,380 40,383 60,384 110,383 140,383 165,382 200,383 230,382 262,378 287,372 310,363 340,348 365,339 385,332 410,328 430,323 440,319 450,315 470,306 490,296 514,286 530,276 550,270 580,268 602,268 625,270 650,272 663,273 680,280 700,288 715,294 727,299 740,298 750,296 770,290 793,285 811,277 840,263 867,250 887,240 907,232 933,226 960,221 983,218 1010,211 1035,202 1067,197 1090,193 1117,192 1140,198 1160,201 1237,200 1253,203 1277,205 1295,207 1311,204'],
    ['longest', '2,385 225,385 287,382 365,375 400,371 430,369 514,356 560,350 590,347 650,342 700,340 727,341 750,339 793,335 850,326 870,323 917,315 960,309 1003,302 1043,296 1110,287 1170,283 1237,276 1300,272 1315,271'],
    ['macd', '2,487 12,488 30,490 45,492 68,492 85,489 110,489 135,490 150,488 165,488 190,490 205,491 225,489 245,486 262,484 285,482 300,478 320,475 340,471 350,472 365,471 380,471 395,474 410,477 435,478 450,474 480,470 500,468 515,467 530,466 540,468 560,475 575,480 590,483 607,487 625,490 645,493 663,495 680,500 700,503 715,507 725,507 738,503 755,494 773,487 785,485 811,479 840,472 865,468 887,466 900,467 920,473 937,476 960,477 982,480 1000,478 1030,476 1060,480 1090,482 1110,484 1130,490 1150,494 1165,494 1185,492 1235,491 1250,494 1290,494 1305,492 1311,491'],
    ['signal', '2,488 40,489 68,490 140,490 200,490 232,489 262,488 291,485 330,478 365,474 395,473 430,476 450,475 490,473 530,469 545,469 565,471 590,476 620,482 663,490 700,497 720,501 737,502 760,501 785,496 811,488 840,480 870,473 890,470 920,470 960,474 990,477 1030,477 1060,478 1090,480 1115,482 1145,487 1178,491 1240,491 1275,493 1311,493'],
    ['rsi', '2,617 6,614 14,623 30,629 48,632 60,630 72,626 80,631 90,629 97,630 105,619 113,628 122,626 130,620 142,616 148,616 154,613 165,621 180,630 190,631 205,628 217,623 230,616 238,616 245,614 263,617 270,605 285,600 295,596 303,597 313,596 320,598 332,598 338,597 345,601 353,608 361,605 370,610 387,609 392,612 403,624 411,622 420,624 428,620 436,623 445,616 452,619 460,612 469,615 477,611 493,610 502,603 510,607 526,605 533,613 544,616 552,625 560,622 568,630 592,630 600,636 608,637 617,633 634,646 645,640 658,633 668,641 683,638 691,643 710,643 717,646 725,645 733,631 741,623 750,622 758,619 767,621 775,611 792,610 800,607 808,606 815,600 825,599 835,599 850,602 880,604 890,605 900,610 908,614 916,622 923,624 931,620 940,626 949,621 957,625 965,625 973,633 982,631 997,625 1006,619 1015,621 1023,612 1031,611 1040,619 1047,616 1056,623 1068,621 1080,616 1088,614 1097,628 1106,624 1118,632 1138,641 1148,638 1153,636 1163,636 1171,629 1183,629 1190,631 1197,634 1205,624 1213,635 1222,629 1238,612 1245,631 1253,624 1262,623 1270,624 1278,629 1295,631 1303,623 1311,623']
];

const hours = ['11:00', '07:00', '12:00', '08:00', '13:00', '09:00', '14:00', '11/04', '15:00', '11:00', '07:00', '12:00', '08:00', '13:00', '09:00', '14:00', '18/04', '15:00', '11:00', '07:00', '12:00', '08:00', '13:00', '09:00', '14:00', '25/04', '15:00', '11:00', '07:00', '12:00', '08:00'];
const fib = [[130, '100%'], [194, '76.4%'], [234, '61.8%'], [266, '50%'], [298, '38.2%'], [338, '23.6%'], [403, '0%']];

let out = '';

function line(cls, x1, y1, x2, y2) {
    out += `<line class="${cls}" x1="${x1}" y1="${y1}" x2="${x2}" y2="${y2}"/>`;
}
function rect(cls, x, y, w, h) {
    out += `<rect class="${cls}" x="${x}" y="${y}" width="${w}" height="${h}"/>`;
}
function text(cls, x, y, value) {
    out += `<text class="${cls}" x="${x}" y="${y}">${value}</text>`;
}
function barX(i) {
    return Math.floor(7.3 + i * 8.262);
}

// grid, the 1 950 label gives way to the last price
for (let i = 0; i < 17; i++) {
    const y = Math.floor(102.3 + i * 21.33);
    line('grid', 2, y + 0.5, 1318, y + 0.5);
    if (i !== 4) text('axis', 1318, y + 4, '1 ' + (990 - i * 10));
}
[521, 554, 587, 591, 624].forEach(y => line('grid', 2, y + 0.5, 1318, y + 0.5));
hours.forEach((h, i) => {
    const x = Math.floor(26.6 + i * 41.33) + 0.5;
    if (i % 9 !== 1) line('grid', x, 94, x, 652);
    text('hours', x, 664, h);
});
line('grid', 1316.5, 94, 1316.5, 652);
[611, 645].forEach(y => line('limit', 2, y + 0.5, 1314, y + 0.5));

// histogram and candles
histogram.forEach((v, i) => rect('hist', barX(i) - 4, v > 0 ? 554 - v : 554, 6, Math.abs(v)));
for (let i = 0; i < 17; i++) {
    const x = Math.floor(68.3 + i * 74.36) + 0.5;
    line('session', x, 94, x, 652);
}
candles.forEach(([high, top, bottom, low, up], i) => {
    const cls = up ? 'up' : 'down';
    rect(cls, barX(i), high, 1, low - high + 1);
    rect(cls, barX(i) - 2, top, 5, bottom - top);
});
lines.forEach(([cls, points]) => out += `<polyline class="${cls}" points="${points}"/>`);

// fibonacci levels and trend line
fib.forEach(([y, label]) => {
    line('fib', 889, y + 0.5, 1316, y + 0.5);
    text('level', 889, y - 3, label);
});
line('thick', 889, 226, 1316, 226);
line('ray', 205, 403.5, 888, 130.5);
line('thick', 893, 130, 1313, 188);
[[893, 130], [1103, 158], [1313, 187]].forEach(([x, y]) => rect('anchor', x - 2, y - 2, 5, 5));

// panels
[460, 512, 589].forEach(y => line('frame', 2, y + 0.5, 1361, y + 0.5));
line('frame', 2, 652.5, 1320, 652.5);
text('panel', 12, 476, 'MACD');
text('panel', 12, 528, 'MACD Histogram');
text('panel', 12, 605, 'RSI');
text('axis', 1318, 525, '5');
text('axis', 1318, 558, '0');
text('axis', 1318, 628, '50');
text('axis', 1318, 591, '-5');
text('axis', 1318, 596, '100');
text('gain', 1314, 107, '+2%');
text('loss', 1314, 272, '-2%');
text('loss', 1314, 356, '-4%');
rect('price', 1317, 179, 44, 13);
text('axis', 1318, 190, '1 951.04');

document.getElementById('chart').innerHTML = out;
```
